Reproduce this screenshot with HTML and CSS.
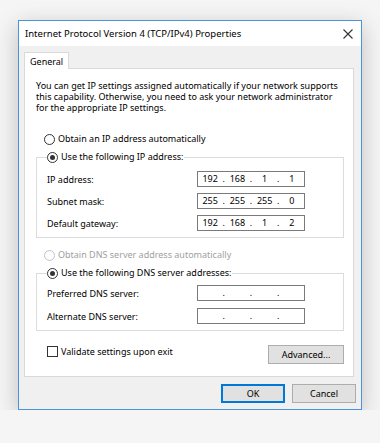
FILE: index.html
```html
<!DOCTYPE html>
<html lang="en">
<head>
    <meta charset="UTF-8">
    <meta name="viewport" content="width=device-width, initial-scale=1.0">
    <title>Internet Protocol Version 4 (TCP/IPv4) Properties</title>
    <link rel="stylesheet" href="styles.css">
</head>
<body>
    <div class="window">
        <div class="titlebar">
            <span class="title">Internet Protocol Version 4 (TCP/IPv4) Properties</span>
            <svg class="close" width="10" height="10" viewBox="0 0 10 10">
                <path d="M0.5 0.5 L9.5 9.5 M9.5 0.5 L0.5 9.5" stroke="#333" stroke-width="1.1" fill="none"/>
            </svg>
        </div>

        <div class="body">
            <div class="tabs">
                <div class="tab">General</div>
            </div>

            <div class="panel">
                <p class="intro">You can get IP settings assigned automatically if your network supports this capability. Otherwise, you need to ask your network administrator for the appropriate IP settings.</p>

                <div class="opt first"><span class="radio"></span>Obtain an IP address automatically</div>

                <fieldset class="group">
                    <legend><span class="opt"><span class="radio checked"></span>Use the following IP address:</span></legend>
                    <div class="row">
                        <span class="label">IP address:</span>
                        <div class="ip"><span>192</span><i>.</i><span>168</span><i>.</i><span>1</span><i>.</i><span>1</span></div>
                    </div>
                    <div class="row">
                        <span class="label">Subnet mask:</span>
                        <div class="ip"><span>255</span><i>.</i><span>255</span><i>.</i><span>255</span><i>.</i><span>0</span></div>
                    </div>
                    <div class="row">
                        <span class="label">Default gateway:</span>
                        <div class="ip"><span>192</span><i>.</i><span>168</span><i>.</i><span>1</span><i>.</i><span>2</span></div>
                    </div>
                </fieldset>

                <div class="opt disabled dns-auto"><span class="radio"></span>Obtain DNS server address automatically</div>

                <fieldset class="group dns">
                    <legend><span class="opt"><span class="radio checked"></span>Use the following DNS server addresses:</span></legend>
                    <div class="row">
                        <span class="label">Preferred DNS server:</span>
                        <div class="ip"><span></span><i>.</i><span></span><i>.</i><span></span><i>.</i><span></span></div>
                    </div>
                    <div class="row">
                        <span class="label">Alternate DNS server:</span>
                        <div class="ip"><span></span><i>.</i><span></span><i>.</i><span></span><i>.</i><span></span></div>
                    </div>
                </fieldset>

                <div class="footer">
                    <label class="check"><span class="box"></span>Validate settings upon exit</label>
                    <button class="btn advanced">Advanced...</button>
                </div>
            </div>

            <div class="actions">
                <button class="btn default">OK</button>
                <button class="btn">Cancel</button>
            </div>
        </div>
    </div>
</body>
</html>
```

FILE: styles.css
```css
body {
    margin: 0;
    padding: 20px 0 0 18px;
    background-color: #f5f5f5;
    font-family: "Noto Sans", "Open Sans", sans-serif;
    font-size: 9px;
    color: #000;
}

.window {
    width: 342px;
    border: 1px solid #4a94d9;
    background-color: #f0f0f0;
    box-shadow: 0 6px 22px rgba(0, 0, 0, 0.22);
}

.titlebar {
    height: 25px;
    background-color: #fff;
    display: flex;
    align-items: center;
    justify-content: space-between;
    padding: 0 8px 0 6px;
    font-size: 9.5px;
}

.body {
    padding: 6px 5px 6px 5px;
}

.tabs {
    display: flex;
    position: relative;
    z-index: 1;
}

.tab {
    width: 45px;
    height: 17px;
    line-height: 17px;
    padding-left: 5px;
    background-color: #fff;
    border: 1px solid #d9d9d9;
    border-bottom: none;
    box-sizing: border-box;
    margin-bottom: -1px;
}

.panel {
    margin-right: 2px;
    background-color: #fff;
    border: 1px solid #d9d9d9;
    padding: 11px 9px 12px 11px;
}

.intro {
    margin: 0;
    line-height: 11px;
}

.opt {
    display: flex;
    align-items: center;
    height: 12px;
    line-height: 12px;
    padding-left: 8px;
}

.opt.first {
    margin-top: 20px;
}

.radio {
    width: 9px;
    height: 9px;
    border: 1px solid #333;
    border-radius: 50%;
    margin-right: 3px;
    position: relative;
    background-color: #fff;
}

.radio.checked::after {
    content: "";
    position: absolute;
    left: 2px;
    top: 2px;
    width: 5px;
    height: 5px;
    border-radius: 50%;
    background-color: #333;
}

.disabled {
    color: #a0a0a0;
}

.disabled .radio {
    border-color: #c4c4c4;
}

.group {
    margin: 6px 0 0 0;
    padding: 8px 0 6px 10px;
    border: 1px solid #dcdcdc;
    display: flex;
    flex-direction: column;
    gap: 6px;
}

.group.dns {
    padding-top: 6px;
    gap: 7px;
}

.group legend {
    padding: 0 1px 0 0;
    margin-left: 0;
}

.group legend .opt {
    padding-left: 0;
}

.row {
    display: flex;
    align-items: center;
    height: 16px;
}

.label {
    width: 150px;
}

.ip {
    width: 108px;
    height: 16px;
    box-sizing: border-box;
    border: 1px solid #7a7a7a;
    display: grid;
    grid-template-columns: 1fr 3px 1fr 3px 1fr 3px 1fr;
    align-items: center;
    line-height: 14px;
}

.ip span {
    text-align: center;
}

.ip i {
    font-style: normal;
    text-align: center;
}

.dns-auto {
    margin-top: 11px;
}

.footer {
    display: flex;
    justify-content: space-between;
    align-items: flex-start;
    margin-top: 14px;
}

.check {
    display: flex;
    align-items: center;
    height: 12px;
    padding-left: 11px;
}

.box {
    width: 9px;
    height: 9px;
    border: 1px solid #333;
    margin-right: 3px;
}

.btn {
    font-family: inherit;
    font-size: 9px;
    color: #000;
    height: 19px;
    width: 64px;
    padding: 0;
    background-color: #e1e1e1;
    border: 1px solid #adadad;
}

.advanced {
    width: 76px;
}

.actions {
    display: flex;
    justify-content: flex-end;
    gap: 7px;
    margin-top: 7px;
}

.btn.default {
    border-color: #0078d7;
    box-shadow: inset 0 0 0 1px #0078d7;
}
```
